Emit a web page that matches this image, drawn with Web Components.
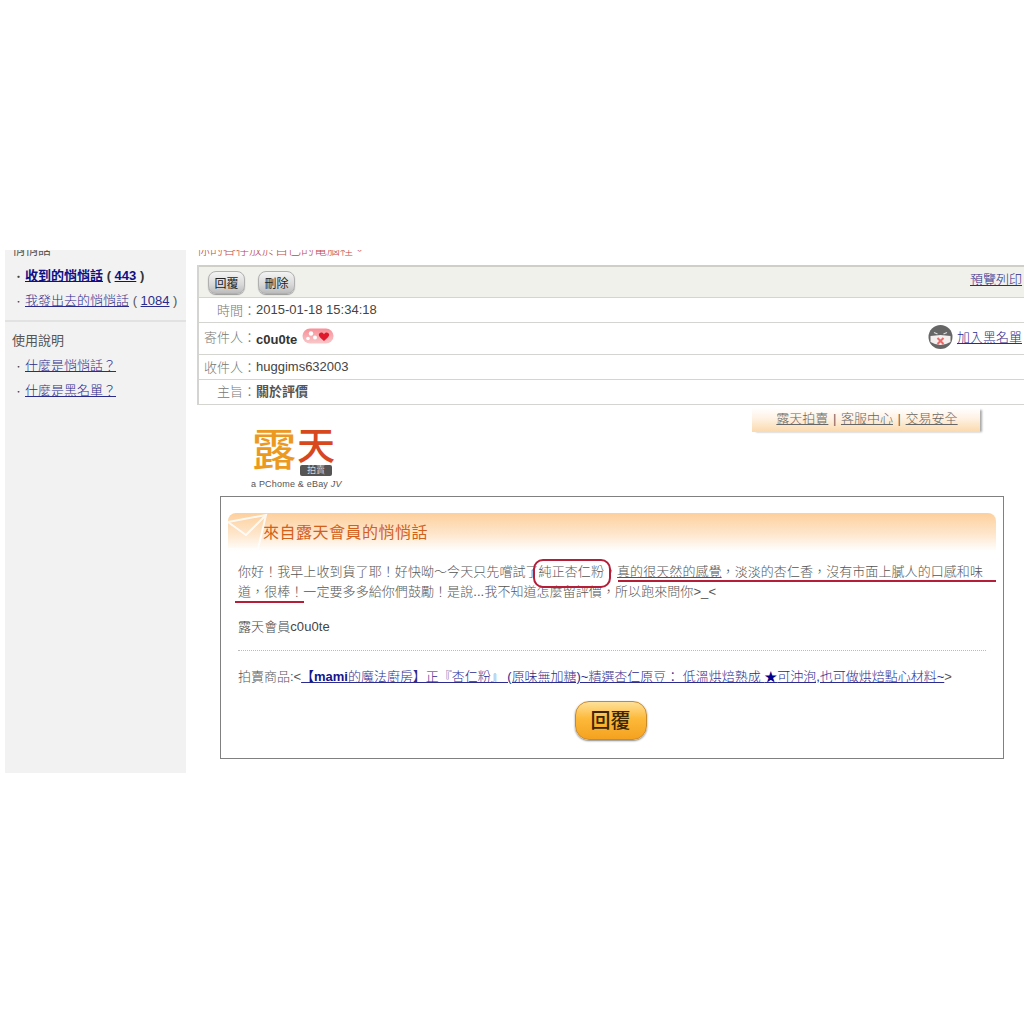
<!DOCTYPE html>
<html lang="zh-Hant">
<head>
<meta charset="utf-8">
<title>悄悄話</title>
<style>
  html, body { margin: 0; padding: 0; background: #fff; }
  body {
    width: 1024px;
    height: 1024px;
    overflow: hidden;
    font-family: "Liberation Sans", "Noto Sans CJK TC", sans-serif;
    font-size: 13px;
    font-weight: 300;
    color: #555;
  }
</style>
</head>
<body>
<whisper-page>
  <side-menu slot="side"></side-menu>
  <message-head slot="main"></message-head>
  <mail-body slot="main"></mail-body>
</whisper-page>

<script>
const LINK = '#2b2b8c';

// page frame, the shot is cropped at y 250 and y 773
class WhisperPage extends HTMLElement {
  constructor() {
    super();
    this.attachShadow({ mode: 'open' });
    this.shadowRoot.innerHTML = `
      <style>
        :host { display: block; padding-top: 250px; }
        .frame { display: flex; height: 523px; overflow: hidden; padding-left: 5px; }
        .side { width: 181px; flex: none; background: #f2f2f2; }
        .main { width: 827px; flex: none; margin-left: 11px; }
      </style>
      <div class="frame">
        <div class="side"><slot name="side"></slot></div>
        <div class="main"><slot name="main"></slot></div>
      </div>
    `;
  }
}

class SideMenu extends HTMLElement {
  constructor() {
    super();
    this.attachShadow({ mode: 'open' });
    this.shadowRoot.innerHTML = `
      <style>
        :host { display: block; font-size: 13px; color: #555; }
        a { color: ${LINK}; text-decoration: underline; }
        h4 { margin: 0; font-size: 13px; font-weight: 400; color: #555; padding-left: 7px; line-height: 18px; }
        .cut { margin-top: -9px; }
        ul { list-style: none; margin: 0; padding: 0 0 0 9px; }
        li { height: 25px; line-height: 25px; white-space: nowrap; }
        li::before { content: "・"; display: inline-block; width: 11px; font-size: 9px; color: #444; }
        .first { margin-top: 4px; }
        .strong { font-weight: 700; color: #333; }
        .strong a { color: #0f0f86; }
        hr { border: 0; border-top: 2px solid #e2e2e2; margin: 7px 0 10px; }
        .gap { margin-top: 3px; }
      </style>
      <h4 class="cut">悄悄話</h4>
      <ul class="first">
        <li class="strong"><a href="#">收到的悄悄話</a> ( <a href="#">443</a> )</li>
        <li><a href="#">我發出去的悄悄話</a> ( <a href="#">1084</a> )</li>
      </ul>
      <hr>
      <h4>使用說明</h4>
      <ul class="gap">
        <li><a href="#">什麼是悄悄話？</a></li>
        <li><a href="#">什麼是黑名單？</a></li>
      </ul>
    `;
  }
}

class MessageRow extends HTMLElement {
  constructor() {
    super();
    this.attachShadow({ mode: 'open' });
    this.shadowRoot.innerHTML = `
      <style>
        :host { display: flex; align-items: center; border-top: 1px solid #d4d4d0; box-sizing: border-box; padding: 0 2px 2px 0; }
        .label { width: 57px; flex: none; text-align: right; color: #777; }
        .value { flex: 1; color: #444; display: flex; align-items: center; }
        .end { flex: none; }
      </style>
      <div class="label"><slot name="label"></slot></div>
      <div class="value"><slot></slot></div>
      <div class="end"><slot name="end"></slot></div>
    `;
  }
}

class MessageHead extends HTMLElement {
  constructor() {
    super();
    this.attachShadow({ mode: 'open' });
    this.shadowRoot.innerHTML = `
      <style>
        :host { display: block; font-size: 13px; }
        a { color: ${LINK}; }
        .warn { height: 16px; margin-top: -8px; line-height: 16px; color: #c04848; font-size: 13px; white-space: nowrap; }
        .table { margin-top: 7px; border-left: 2px solid #d4d4d0; border-bottom: 1px solid #d4d4d0; }
        .bar {
          height: 30px; display: flex; align-items: center; gap: 13px;
          background: #f1f1ec; border-top: 2px solid #cfcfc8; padding: 0 2px 0 9px;
        }
        .bar a { margin: 0 0 8px auto; }
        button {
          width: 37px; height: 23px; padding: 0; border: 1px solid #b0b0b0; border-radius: 8px;
          background: linear-gradient(#f4f4f4, #d8d8d8 60%, #bcbcbc);
          box-shadow: 0 1px 1px #999; font: 12px "Liberation Sans", "Noto Sans CJK TC", sans-serif; color: #222;
        }
        .r1 { height: 25px; }
        .r2 { height: 32px; padding-bottom: 4px; }
        .r3 { height: 25px; }
        .r4 { height: 25px; padding-bottom: 4px; }
        .r2 b { font-weight: 700; color: #333; position: relative; top: 3px; }
        .badge { margin: -2px 0 0 5px; display: block; }
        .end { display: flex; align-items: center; gap: 4px; }
        .subject { font-weight: 700; color: #555; }
      </style>
      <div class="warn">你的各存放於自己的電腦裡。</div>
      <div class="table">
        <div class="bar">
          <button>回覆</button><button>刪除</button>
          <a href="#">預覽列印</a>
        </div>
        <message-row class="r1"><span slot="label">時間：</span>2015-01-18 15:34:18</message-row>
        <message-row class="r2">
          <span slot="label">寄件人：</span>
          <b>c0u0te</b>
          <svg class="badge" width="32" height="16" viewBox="0 0 32 16">
            <defs><linearGradient id="bg" x1="0" y1="0" x2="0" y2="1"><stop offset="0" stop-color="#f78f96"/><stop offset="1" stop-color="#f8c8ca"/></linearGradient></defs>
            <rect x="0.5" y="0.5" width="31" height="15" rx="7.5" fill="url(#bg)"/>
            <circle cx="9" cy="5.5" r="2.2" fill="#fff"/><circle cx="13" cy="9.5" r="2" fill="#fff"/><circle cx="6" cy="10.5" r="1.8" fill="#fff"/>
            <path d="M22 13 C17 9 16 7 17.5 5.3 C19 4 21 4.6 22 6.2 C23 4.6 25 4 26.5 5.3 C28 7 27 9 22 13Z" fill="#e0182c"/>
          </svg>
          <span slot="end" class="end">
            <svg width="25" height="24" viewBox="0 0 25 24">
              <circle cx="12.5" cy="12" r="12" fill="#666"/>
              <path d="M6 7.5 l3.5 1.5 M19 7.5 l-3.5 1.5" stroke="#ddd" stroke-width="1.3"/>
              <path d="M2.5 11 L12.5 10 L22.5 11 V17 Q12.5 23 2.5 17Z" fill="#f4eeee"/>
              <path d="M9.5 13 L15.5 19 M15.5 13 L9.5 19" stroke="#ea6a6a" stroke-width="2"/>
            </svg>
            <a href="#">加入黑名單</a>
          </span>
        </message-row>
        <message-row class="r3"><span slot="label">收件人：</span>huggims632003</message-row>
        <message-row class="r4"><span slot="label">主旨：</span><span class="subject">關於評價</span></message-row>
      </div>
    `;
  }
}

class MailBody extends HTMLElement {
  constructor() {
    super();
    this.attachShadow({ mode: 'open' });
    this.shadowRoot.innerHTML = `
      <style>
        :host { display: block; position: relative; font-size: 13px; color: #555; }
        .tab-row { display: flex; justify-content: flex-end; padding-right: 44px; padding-top: 3px; height: 24px; }
        .tab {
          width: 226px; padding-left: 2px; height: 24px; line-height: 22px; text-align: center; color: #666; font-size: 13px;
          background: linear-gradient(#fff, #fef1e2 45%, #fbd9ac);
          box-shadow: 3px 1px 2px -1px #aaa; white-space: nowrap; word-spacing: 1px;
        }
        .tab a { color: #666; }
        .logo { height: 64px; margin: -4px 0 0 53px; width: 92px; position: relative; }
        .logo .lu { position: absolute; left: 2px; top: 0; font-size: 44px; line-height: 46px; font-weight: 500; color: #ec9a1f; }
        .logo .tian { position: absolute; left: 47px; top: 0; font-size: 38px; line-height: 36px; font-weight: 500; color: #d8481e; }
        .logo .pai { position: absolute; left: 50px; top: 37px; width: 32px; height: 11px; border-radius: 2px; background: #555; color: #fff; font-size: 9px; line-height: 11px; text-align: center; }
        .logo .jv { position: absolute; left: 1px; top: 50px; font-size: 9px; line-height: 12px; font-weight: 400; letter-spacing: .2px; color: #555; white-space: nowrap; }
        .logo .jv i { font-style: italic; }
        .card { margin: 4px 0 0 23px; width: 784px; height: 263px; box-sizing: border-box; border: 1px solid #808080; padding: 16px 7px 0; }
        .title {
          position: relative; height: 38px; border-radius: 8px 8px 0 0; box-sizing: border-box; padding: 0 0 2px 35px;
          background: linear-gradient(#fdd09c, #fee6cc 55%, #fff);
          display: flex; align-items: center;
          font-size: 16px; font-weight: 400; letter-spacing: .5px; color: #d2601a;
        }
        .title svg { position: absolute; left: 0; top: 0; }
        .text { padding: 0 10px; line-height: 20px; white-space: nowrap; letter-spacing: .07px; }
        .p1 { margin-top: 11px; }
        .p2 { margin-top: 15px; color: #444; }
        .dots { border-top: 1px dotted #bbb; margin: 13px 10px 0; }
        .p3 { margin-top: 16px; letter-spacing: -.02px; }
        .p3 a { color: #2b2b90; }
        .p3 b { font-weight: 700; color: #14148c; }
        .star { color: #00008c; }
        .reply-row { display: flex; justify-content: center; margin-top: 14px; padding-right: 3px; }
        .reply {
          width: 72px; height: 39px; box-sizing: border-box; padding: 0; border: 1px solid #c98a2a; border-radius: 14px;
          background: linear-gradient(#fde19a, #fdb93a 45%, #f4a21f);
          box-shadow: 0 1px 2px #888; color: #3c2600;
          font: 500 20px/36px "Liberation Sans", "Noto Sans CJK TC", sans-serif;
        }
        .ink { position: absolute; background: #b41e38; height: 2px; }
        .ring { position: absolute; left: 336px; top: 154px; width: 78px; height: 29px; box-sizing: border-box; border: 2px solid #b41e38; border-radius: 10px; }
      </style>
      <div class="tab-row">
        <div class="tab"><a href="#">露天拍賣</a> | <a href="#">客服中心</a> | <a href="#">交易安全</a></div>
      </div>
      <div class="logo">
        <span class="lu">露</span><span class="tian">天</span><span class="pai">拍賣</span>
        <span class="jv">a PChome &amp; eBay <i>JV</i></span>
      </div>
      <div class="card">
        <div class="title">
          <svg width="50" height="38" viewBox="0 0 50 38" fill="none" stroke="#fff" stroke-width="2" opacity=".85">
            <path d="M0 9 L38 2 L30 36 L0 36"/><path d="M0 9 L18 22 L38 2"/>
          </svg>
          來自露天會員的悄悄話
        </div>
        <div class="text p1">你好！我早上收到貨了耶！好快呦～今天只先嚐試了純正杏仁粉，<u>真的很天然的感覺</u>，淡淡的杏仁香，沒有市面上膩人的口感和味<br>道，很棒！一定要多多給你們鼓勵！是說...我不知道怎麼留評價，所以跑來問你&gt;_&lt;</div>
        <div class="text p2">露天會員c0u0te</div>
        <div class="dots"></div>
        <div class="text p3">拍賣商品:&lt;<a href="#"><b>【mami</b>的魔法廚房】正『杏仁粉』 (原味無加糖)~精選杏仁原豆： 低溫烘焙熟成 <span class="star">★</span>可沖泡,也可做烘焙點心材料~</a>&gt;</div>
        <div class="reply-row"><button class="reply">回覆</button></div>
      </div>
      <!-- red pen marks drawn over the mail -->
      <div class="ring"></div>
      <div class="ink" style="left:421px;top:175px;width:378px"></div>
      <div class="ink" style="left:38px;top:196px;width:69px"></div>
    `;
  }
}

customElements.define('whisper-page', WhisperPage);
customElements.define('side-menu', SideMenu);
customElements.define('message-row', MessageRow);
customElements.define('message-head', MessageHead);
customElements.define('mail-body', MailBody);
</script>
</body>
</html>
